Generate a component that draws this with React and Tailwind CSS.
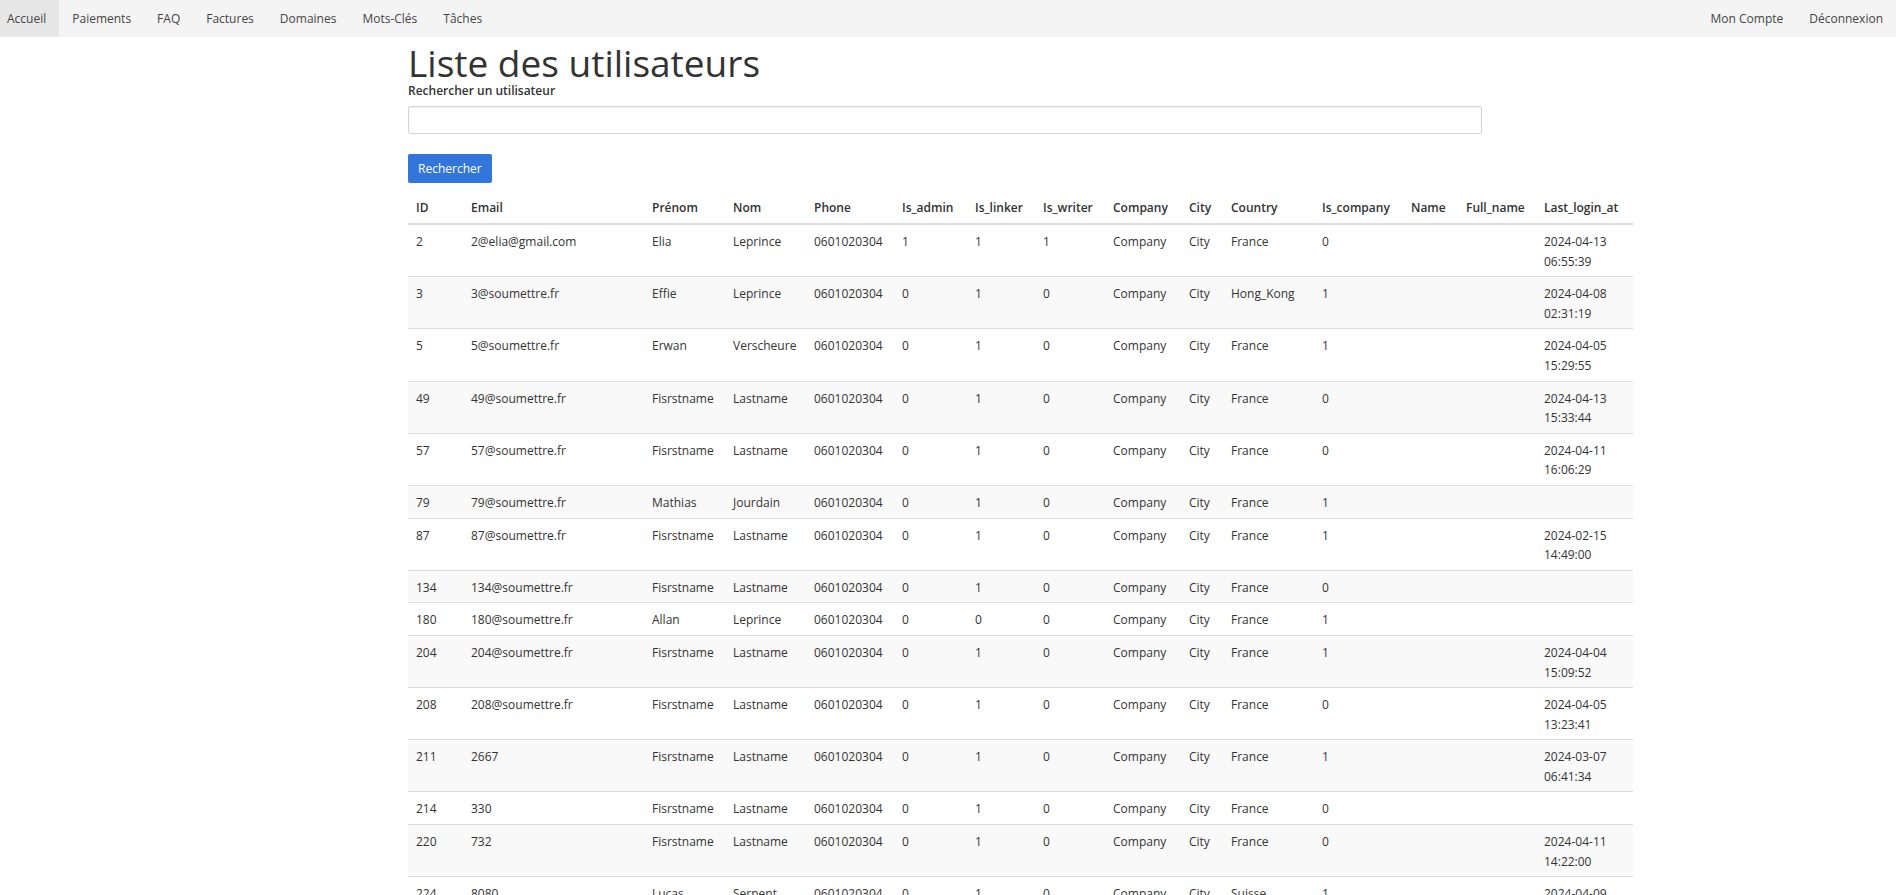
import React from "react";

const navLeft = ["Accueil", "Paiements", "FAQ", "Factures", "Domaines", "Mots-Clés", "Tâches"];
const navRight = ["Mon Compte", "Déconnexion"];

const columns = [
  { label: "ID", w: "w-[55px]" },
  { label: "Email", w: "w-[181px]" },
  { label: "Prénom", w: "w-[81px]" },
  { label: "Nom", w: "w-[81px]" },
  { label: "Phone", w: "w-[88px]" },
  { label: "Is_admin", w: "w-[73px]" },
  { label: "Is_linker", w: "w-[68px]" },
  { label: "Is_writer", w: "w-[70px]" },
  { label: "Company", w: "w-[76px]" },
  { label: "City", w: "w-[42px]" },
  { label: "Country", w: "w-[91px]" },
  { label: "Is_company", w: "w-[89px]" },
  { label: "Name", w: "w-[55px]" },
  { label: "Full_name", w: "w-[78px]" },
  { label: "Last_login_at", w: "w-[97px]" },
];

// id, email, prenom, nom, admin, linker, writer, country, is_company, last login
const users = [
  [2, "2@elia@gmail.com", "Elia", "Leprince", 1, 1, 1, "France", 0, "2024-04-13 06:55:39"],
  [3, "3@soumettre.fr", "Effie", "Leprince", 0, 1, 0, "Hong_Kong", 1, "2024-04-08 02:31:19"],
  [5, "5@soumettre.fr", "Erwan", "Verscheure", 0, 1, 0, "France", 1, "2024-04-05 15:29:55"],
  [49, "49@soumettre.fr", "Fisrstname", "Lastname", 0, 1, 0, "France", 0, "2024-04-13 15:33:44"],
  [57, "57@soumettre.fr", "Fisrstname", "Lastname", 0, 1, 0, "France", 0, "2024-04-11 16:06:29"],
  [79, "79@soumettre.fr", "Mathias", "Jourdain", 0, 1, 0, "France", 1, ""],
  [87, "87@soumettre.fr", "Fisrstname", "Lastname", 0, 1, 0, "France", 1, "2024-02-15 14:49:00"],
  [134, "134@soumettre.fr", "Fisrstname", "Lastname", 0, 1, 0, "France", 0, ""],
  [180, "180@soumettre.fr", "Allan", "Leprince", 0, 0, 0, "France", 1, ""],
  [204, "204@soumettre.fr", "Fisrstname", "Lastname", 0, 1, 0, "France", 1, "2024-04-04 15:09:52"],
  [208, "208@soumettre.fr", "Fisrstname", "Lastname", 0, 1, 0, "France", 0, "2024-04-05 13:23:41"],
  [211, "2667", "Fisrstname", "Lastname", 0, 1, 0, "France", 1, "2024-03-07 06:41:34"],
  [214, "330", "Fisrstname", "Lastname", 0, 1, 0, "France", 0, ""],
  [220, "732", "Fisrstname", "Lastname", 0, 1, 0, "France", 0, "2024-04-11 14:22:00"],
  [224, "8080", "Lucas", "Serpent", 0, 1, 0, "Suisse", 1, "2024-04-09 10:12:45"],
  [231, "231@soumettre.fr", "Fisrstname", "Lastname", 0, 1, 0, "France", 0, ""],
  [236, "236@soumettre.fr", "Fisrstname", "Lastname", 0, 1, 0, "France", 1, "2024-04-10 09:41:12"],
];

function Cell({ children }) {
  return (
    <td className="px-[8px] pt-[7px] pb-[5px] align-top border-b border-[#dddddd] leading-[19.6px]">
      {children}
    </td>
  );
}

export default function App() {
  return (
    <div className="min-h-screen bg-white text-[#333333] text-[12px] font-['Open_Sans','Noto_Sans',sans-serif]">
      {/* Navbar */}
      <nav className="h-[37px] bg-[#f4f4f4] flex items-stretch">
        <ul className="flex items-stretch">
          {navLeft.map((item, i) => (
            <li
              key={item}
              className={
                i === 0
                  ? "flex items-center pl-[7px] pr-[13px] bg-[#e7e7e7] text-[#444444]"
                  : "flex items-center px-[13px] text-[#444444]"
              }
            >
              {item}
            </li>
          ))}
        </ul>
        <ul className="ml-auto flex items-stretch">
          {navRight.map((item) => (
            <li key={item} className="flex items-center px-[13px] text-[#444444]">
              {item}
            </li>
          ))}
        </ul>
      </nav>

      <div className="mx-auto w-[1080px]">
        <h1 className="mt-[6px] text-[37px] leading-[39px] font-medium text-[#333333]">
          Liste des utilisateurs
        </h1>
        <label className="block font-semibold leading-[17px] mb-[7px]">Rechercher un utilisateur</label>
        <input
          type="text"
          className="block w-[1074px] h-[28px] border border-[#d4d4d4] rounded-[2px] bg-white px-2 shadow-[inset_0_1px_1px_rgba(0,0,0,0.06)]"
        />
        <button className="mt-[20px] h-[29px] px-[10px] rounded-[2px] bg-[#3276dc] text-white text-[12px]">
          Rechercher
        </button>

        <table className="mt-[8px] w-[1225px] table-fixed border-separate border-spacing-0 text-left">
          <colgroup>
            {columns.map((c) => (
              <col key={c.label} className={c.w} />
            ))}
          </colgroup>
          <thead>
            <tr>
              {columns.map((c) => (
                <th
                  key={c.label}
                  className="px-[8px] pt-[7px] pb-[5px] leading-[20px] font-semibold border-b-2 border-[#dddddd] whitespace-nowrap"
                >
                  {c.label}
                </th>
              ))}
            </tr>
          </thead>
          <tbody>
            {users.map((u, i) => {
              const [id, email, prenom, nom, admin, linker, writer, country, isCompany, last] = u;
              const [date, time] = last ? last.split(" ") : ["", ""];
              return (
                <tr key={id} className={i % 2 === 1 ? "bg-[#f9f9f9]" : "bg-white"}>
                  <Cell>{id}</Cell>
                  <Cell>{email}</Cell>
                  <Cell>{prenom}</Cell>
                  <Cell>{nom}</Cell>
                  <Cell>0601020304</Cell>
                  <Cell>{admin}</Cell>
                  <Cell>{linker}</Cell>
                  <Cell>{writer}</Cell>
                  <Cell>Company</Cell>
                  <Cell>City</Cell>
                  <Cell>{country}</Cell>
                  <Cell>{isCompany}</Cell>
                  <Cell></Cell>
                  <Cell></Cell>
                  <Cell>
                    {last ? (
                      <>
                        <span className="block">{date}</span>
                        <span className="block">{time}</span>
                      </>
                    ) : null}
                  </Cell>
                </tr>
              );
            })}
          </tbody>
        </table>
      </div>
    </div>
  );
}
